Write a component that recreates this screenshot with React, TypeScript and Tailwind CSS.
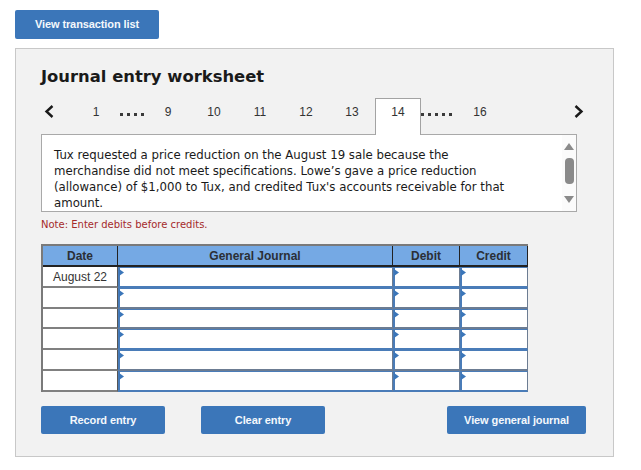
const ROWS = [
  { height: "h-[21px]", line: "border-b-[#4a7cb8]" },
  { height: "h-[21px]", line: "border-b-[#6c7c92]" },
  { height: "h-[20px]", line: "border-b-[#6c7c92]" },
  { height: "h-[21px]", line: "border-b-[#4a7cb8]" },
  { height: "h-[21px]", line: "border-b-[#6c7c92]" },
  { height: "h-[21px]", line: "border-b-[#4a7cb8]" },
];

function ActionButton({ label, className }: { label: string; className: string }) {
  return (
    <button className={`flex h-[28px] items-center justify-center rounded-[2px] bg-[#3b76b9] text-[11px] font-bold tracking-[-0.1px] text-[#f4f8fc] ${className}`}>
      {label}
    </button>
  );
}

function Tab({ label, active }: { label: string; active?: boolean }) {
  if (active) {
    return (
      <div className="relative z-10 flex h-[37px] w-[46px] items-center justify-center border border-b-0 border-[#a3a3a3] bg-white pb-[10px]">
        {label}
      </div>
    );
  }
  return <div className="flex h-[36px] w-[46px] items-center justify-center pb-[8px]">{label}</div>;
}

function Dots({ count, className }: { count: number; className: string }) {
  return (
    <div className={`flex h-[36px] gap-[4px] pt-[15px] ${className}`}>
      {Array.from({ length: count }).map((_, i) => (
        <span key={i} className="h-[3px] w-[3px] bg-[#3a3a3a]" />
      ))}
    </div>
  );
}

function Chevron({ d }: { d: string }) {
  return (
    <svg width="10" height="13" viewBox="0 0 10 13" fill="none" stroke="#1a1a1a" strokeWidth="2.4">
      <path d={d} />
    </svg>
  );
}

function EntryCell({ line, className }: { line: string; className: string }) {
  return (
    <div className={`relative border-t border-r border-b-2 border-l-2 border-t-[#4a7cb8] border-r-[#6c7c92] border-l-[#4a7cb8] bg-white ${line} ${className}`}>
      <svg className="absolute top-[1px] -left-[1px]" width="5" height="7" viewBox="0 0 5 7">
        <path d="M0 0 L5 3.5 L0 7 Z" fill="#3b76b9" />
      </svg>
    </div>
  );
}

function JournalRow({ date, height, line }: { date?: string; height: string; line: string }) {
  return (
    <div className={`flex ${height}`}>
      <div className="flex w-[75px] items-center justify-center border-r border-b-2 border-r-[#555] border-b-[#808080] bg-white text-[12px] text-[#333]">
        {date}
      </div>
      <EntryCell line={line} className="w-[275px]" />
      <EntryCell line={line} className="w-[67px]" />
      <EntryCell line={line} className="w-[68px]" />
    </div>
  );
}

export default function App() {
  return (
    <div className="h-[470px] w-[641px] bg-white pt-[10px] pl-[15px] font-['Liberation_Sans',sans-serif]">
      <button className="flex h-[29px] w-[144px] items-center justify-center rounded-[2px] bg-[#3b76b9] text-[11px] font-bold tracking-[-0.1px] text-[#f4f8fc]">
        View transaction list
      </button>

      <div className="mt-[9px] h-[409px] w-[599px] border border-[#c8c8c8] bg-[#f2f2f2] px-[25px] pt-[16px]">
        <h1 className="font-['DejaVu_Sans',sans-serif] text-[16.4px] leading-[24px] font-bold text-[#1a1a1a]">Journal entry worksheet</h1>

        <div className="mt-[9px] flex h-[36px] w-[545px] items-center text-[12px] text-[#333]">
          <div className="flex h-[36px] w-[32px] items-start pt-[7px] pl-[3px]">
            <Chevron d="M8.5 1 L2.5 6.5 L8.5 12" />
          </div>
          <Tab label="1" />
          <Dots count={4} className="w-[26px] pl-[1px]" />
          <Tab label="9" />
          <Tab label="10" />
          <Tab label="11" />
          <Tab label="12" />
          <Tab label="13" />
          <Tab label="14" active />
          <Dots count={5} className="w-[36px]" />
          <Tab label="16" />
          <div className="ml-auto flex h-[36px] items-start pt-[7px] pr-[2px]">
            <Chevron d="M1.5 1 L7.5 6.5 L1.5 12" />
          </div>
        </div>

        <div className="flex h-[78px] w-[536px] overflow-hidden border border-[#a9a9a9] bg-white">
          <p className="w-[520px] shrink-0 pt-[12px] pl-[12px] font-['DejaVu_Sans',sans-serif] text-[11.75px] leading-[16px] text-[#1a1a1a]">
            Tux requested a price reduction on the August 19 sale because the
            <br />
            merchandise did not meet specifications. Lowe’s gave a price reduction
            <br />
            (allowance) of $1,000 to Tux, and credited Tux's accounts receivable for that
            <br />
            amount.
          </p>
          <div className="flex w-[14px] flex-col items-center bg-[#fbfbfb] pt-[8px]">
            <svg width="10" height="7" viewBox="0 0 10 7">
              <path d="M5 0 L10 7 L0 7 Z" fill="#8a8a8a" />
            </svg>
            <div className="mt-[8px] h-[26px] w-[9px] rounded-[4px] bg-[#8a8a8a]" />
            <svg className="mt-[12px]" width="10" height="7" viewBox="0 0 10 7">
              <path d="M0 0 L10 0 L5 7 Z" fill="#8a8a8a" />
            </svg>
          </div>
        </div>

        <p className="mt-[6px] font-['DejaVu_Sans',sans-serif] text-[10px] leading-[13px] text-[#a52a2a]">Note: Enter debits before credits.</p>

        <div className="mt-[13px] w-[487px] border-t-2 border-l-2 border-[#7a7a7a]">
          <div className="flex h-[21px] border-b-2 border-[#222] bg-[#75a9e4] text-[12px] font-bold text-[#2b2f36]">
            <div className="flex w-[75px] items-center justify-center border-r border-[#222]">Date</div>
            <div className="flex w-[275px] items-center justify-center border-r border-[#222]">General Journal</div>
            <div className="flex w-[67px] items-center justify-center border-r border-[#222]">Debit</div>
            <div className="flex w-[68px] items-center justify-center border-r border-[#222]">Credit</div>
          </div>
          {ROWS.map((row, i) => (
            <JournalRow key={i} height={row.height} line={row.line} date={i === 0 ? "August 22" : undefined} />
          ))}
        </div>

        <div className="mt-[14px] flex w-[545px]">
          <ActionButton label="Record entry" className="w-[124px]" />
          <ActionButton label="Clear entry" className="ml-[36px] w-[124px]" />
          <ActionButton label="View general journal" className="ml-auto w-[139px]" />
        </div>
      </div>
    </div>
  );
}
